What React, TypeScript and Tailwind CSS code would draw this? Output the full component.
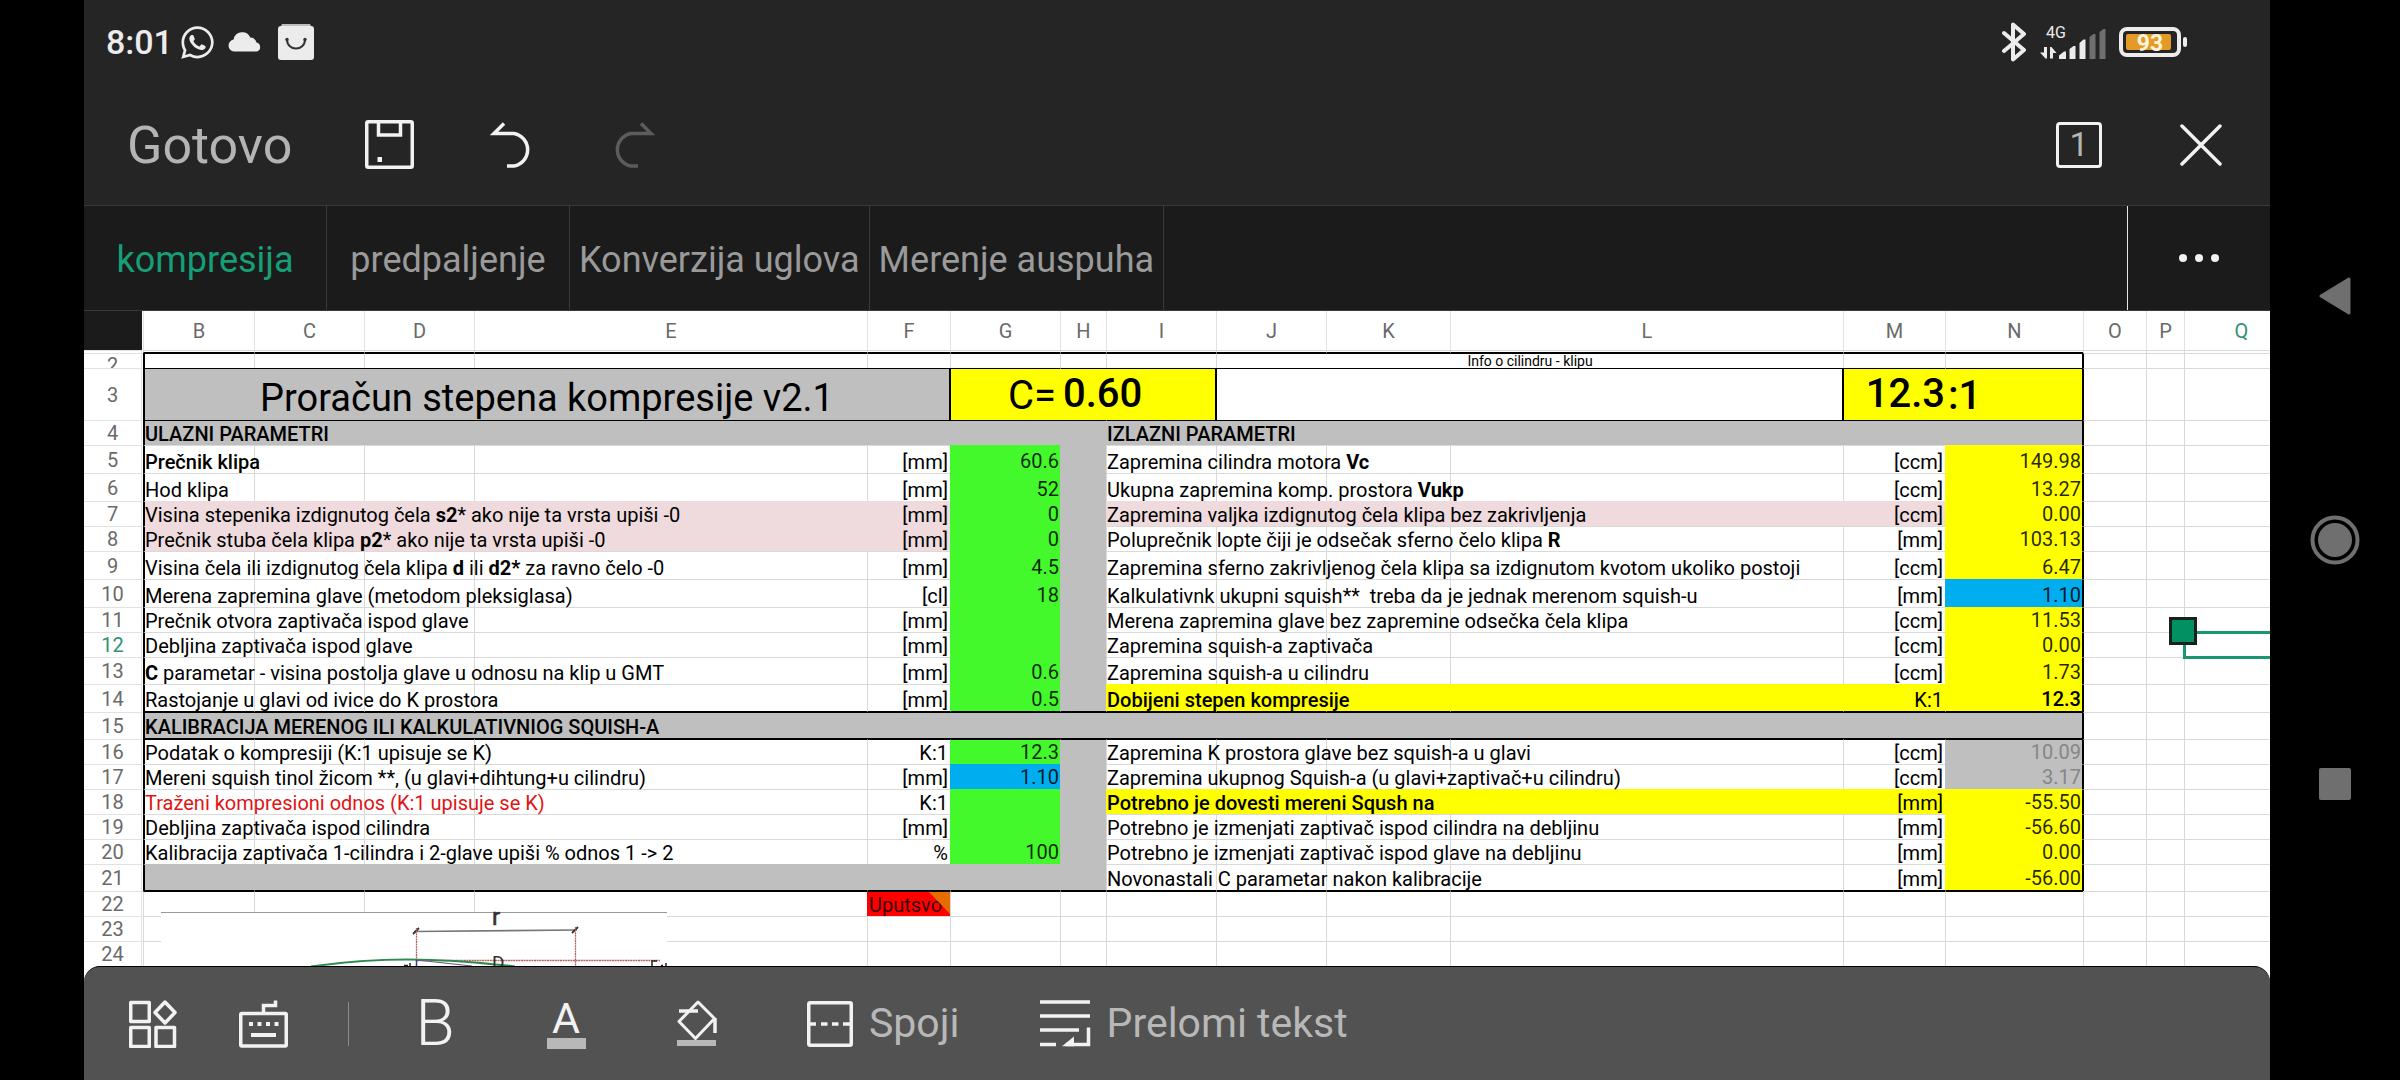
import React, { useState } from 'react';
import clsx from 'clsx';
import { FaWhatsapp } from 'react-icons/fa';

const fills = {
  none: 'bg-white border-[#d9d9d9]',
  gray: 'bg-[#bfbfbf] border-transparent',
  pink: 'bg-[#efdbdd] border-transparent',
  green: 'bg-[#43f82b] border-transparent',
  yellow: 'bg-[#ffff00] border-transparent',
  blue: 'bg-[#00adef] border-transparent',
  red: 'bg-[#ff0000] border-transparent',
};

type Fill = keyof typeof fills;

interface Side {
  label: React.ReactNode;
  unit: string;
  value: string;
  fill?: Fill;
  valueFill: Fill;
  className?: string;
  valueClass?: string;
}

interface SheetRow {
  n: number;
  height: string;
  edge?: string;
  left: Side | null;
  right: Side;
}

const faux = 'font-medium';

const rows: SheetRow[] = [
  {
    n: 5,
    height: 'h-[28px]',
    left: { label: 'Prečnik klipa', unit: '[mm]', value: '60.6', valueFill: 'green', className: faux },
    right: { label: <>Zapremina cilindra motora <b>Vc</b></>, unit: '[ccm]', value: '149.98', valueFill: 'yellow' },
  },
  {
    n: 6,
    height: 'h-[28px]',
    left: { label: 'Hod klipa', unit: '[mm]', value: '52', valueFill: 'green' },
    right: { label: <>Ukupna zapremina komp. prostora <b>Vukp</b></>, unit: '[ccm]', value: '13.27', valueFill: 'yellow' },
  },
  {
    n: 7,
    height: 'h-[25px]',
    left: {
      label: <>Visina stepenika izdignutog čela <b>s2</b>* ako nije ta vrsta upiši -0</>,
      unit: '[mm]',
      value: '0',
      fill: 'pink',
      valueFill: 'green',
    },
    right: {
      label: 'Zapremina valjka izdignutog čela klipa bez zakrivljenja',
      unit: '[ccm]',
      value: '0.00',
      fill: 'pink',
      valueFill: 'yellow',
    },
  },
  {
    n: 8,
    height: 'h-[25px]',
    left: {
      label: <>Prečnik stuba čela klipa <b>p2</b>* ako nije ta vrsta upiši -0</>,
      unit: '[mm]',
      value: '0',
      fill: 'pink',
      valueFill: 'green',
    },
    right: { label: <>Poluprečnik lopte čiji je odsečak sferno čelo klipa <b>R</b></>, unit: '[mm]', value: '103.13', valueFill: 'yellow' },
  },
  {
    n: 9,
    height: 'h-[28px]',
    left: {
      label: <>Visina čela ili izdignutog čela klipa <b>d</b> ili <b>d2*</b> za ravno čelo -0</>,
      unit: '[mm]',
      value: '4.5',
      valueFill: 'green',
    },
    right: {
      label: 'Zapremina sferno zakrivljenog čela klipa sa izdignutom kvotom ukoliko postoji',
      unit: '[ccm]',
      value: '6.47',
      valueFill: 'yellow',
    },
  },
  {
    n: 10,
    height: 'h-[28px]',
    left: { label: 'Merena zapremina glave (metodom pleksiglasa)', unit: '[cl]', value: '18', valueFill: 'green' },
    right: { label: 'Kalkulativnk ukupni squish**  treba da je jednak merenom squish-u', unit: '[mm]', value: '1.10', valueFill: 'blue' },
  },
  {
    n: 11,
    height: 'h-[25px]',
    left: { label: 'Prečnik otvora zaptivača ispod glave', unit: '[mm]', value: '', valueFill: 'green' },
    right: { label: 'Merena zapremina glave bez zapremine odsečka čela klipa', unit: '[ccm]', value: '11.53', valueFill: 'yellow' },
  },
  {
    n: 12,
    height: 'h-[25px]',
    left: { label: 'Debljina zaptivača ispod glave', unit: '[mm]', value: '', valueFill: 'green' },
    right: { label: 'Zapremina squish-a zaptivača', unit: '[ccm]', value: '0.00', valueFill: 'yellow' },
  },
  {
    n: 13,
    height: 'h-[27px]',
    left: { label: <><b>C</b> parametar - visina postolja glave u odnosu na klip u GMT</>, unit: '[mm]', value: '0.6', valueFill: 'green' },
    right: { label: 'Zapremina squish-a u cilindru', unit: '[ccm]', value: '1.73', valueFill: 'yellow' },
  },
  {
    n: 14,
    height: 'h-[28px]',
    edge: 'border-b border-b-black',
    left: { label: 'Rastojanje u glavi od ivice do K prostora', unit: '[mm]', value: '0.5', valueFill: 'green' },
    right: {
      label: 'Dobijeni stepen kompresije',
      unit: 'K:1',
      value: '12.3',
      fill: 'yellow',
      valueFill: 'yellow',
      className: faux,
      valueClass: faux,
    },
  },
  {
    n: 16,
    height: 'h-[25px]',
    edge: 'border-t-black',
    left: { label: 'Podatak o kompresiji (K:1 upisuje se K)', unit: 'K:1', value: '12.3', valueFill: 'green' },
    right: {
      label: 'Zapremina K prostora glave bez squish-a u glavi',
      unit: '[ccm]',
      value: '10.09',
      valueFill: 'gray',
      valueClass: 'text-[#868686]',
    },
  },
  {
    n: 17,
    height: 'h-[25px]',
    left: { label: 'Mereni squish tinol žicom **, (u glavi+dihtung+u cilindru)', unit: '[mm]', value: '1.10', valueFill: 'blue' },
    right: {
      label: 'Zapremina ukupnog Squish-a (u glavi+zaptivač+u cilindru)',
      unit: '[ccm]',
      value: '3.17',
      valueFill: 'gray',
      valueClass: 'text-[#868686]',
    },
  },
  {
    n: 18,
    height: 'h-[25px]',
    left: {
      label: 'Traženi kompresioni odnos (K:1 upisuje se K)',
      unit: 'K:1',
      value: '',
      valueFill: 'green',
      className: 'text-[#e01414]',
    },
    right: {
      label: 'Potrebno je dovesti mereni Sqush na',
      unit: '[mm]',
      value: '-55.50',
      fill: 'yellow',
      valueFill: 'yellow',
      className: faux,
    },
  },
  {
    n: 19,
    height: 'h-[25px]',
    left: { label: 'Debljina zaptivača ispod cilindra', unit: '[mm]', value: '', valueFill: 'green' },
    right: { label: 'Potrebno je izmenjati zaptivač ispod cilindra na debljinu', unit: '[mm]', value: '-56.60', valueFill: 'yellow' },
  },
  {
    n: 20,
    height: 'h-[25px]',
    left: { label: 'Kalibracija zaptivača 1-cilindra i 2-glave upiši % odnos 1 -> 2', unit: '%', value: '100', valueFill: 'green' },
    right: { label: 'Potrebno je izmenjati zaptivač ispod glave na debljinu', unit: '[mm]', value: '0.00', valueFill: 'yellow' },
  },
  {
    n: 21,
    height: 'h-[27px]',
    edge: 'border-b border-b-black',
    left: null,
    right: { label: 'Novonastali C parametar nakon kalibracije', unit: '[mm]', value: '-56.00', valueFill: 'yellow' },
  },
];

const columns = [
  { name: 'B', width: 'w-[111px]' },
  { name: 'C', width: 'w-[110px]' },
  { name: 'D', width: 'w-[110px]' },
  { name: 'E', width: 'w-[393px]' },
  { name: 'F', width: 'w-[83px]' },
  { name: 'G', width: 'w-[110px]' },
  { name: 'H', width: 'w-[46px]' },
  { name: 'I', width: 'w-[110px]' },
  { name: 'J', width: 'w-[110px]' },
  { name: 'K', width: 'w-[124px]' },
  { name: 'L', width: 'w-[393px]' },
  { name: 'M', width: 'w-[102px]' },
  { name: 'N', width: 'w-[138px]' },
  { name: 'O', width: 'w-[63px]' },
  { name: 'P', width: 'w-[38px]' },
  { name: 'Q', width: 'w-[114px]' },
];

const tabs = ['kompresija', 'predpaljenje', 'Konverzija uglova', 'Merenje auspuha'];

interface CellProps {
  fill?: Fill;
  className?: string;
  colSpan?: number;
  children?: React.ReactNode;
}

const Cell: React.FC<CellProps> = ({ fill = 'none', className, colSpan, children }) => (
  <td colSpan={colSpan} className={clsx('border-t border-l p-0 align-bottom whitespace-pre', fills[fill], className)}>
    {children}
  </td>
);

const RowHead: React.FC<{ n?: React.ReactNode; className?: string }> = ({ n, className }) => (
  <>
    <th
      scope="row"
      className={clsx(
        'border-t border-r border-[#e2e2e2] bg-white p-0 align-middle font-normal',
        n === 12 ? 'text-[#2f9273]' : 'text-[#6a6a6a]',
        className
      )}
    >
      {n}
    </th>
    <td className="border-t border-[#e2e2e2] bg-white p-0" />
  </>
);

// columns right of the framed area
const Tail: React.FC<{ framed?: boolean; selected?: boolean }> = ({ framed = true, selected }) => (
  <>
    <Cell className={clsx(framed && 'border-l-black')} />
    <Cell />
    <td className={clsx('border-t border-l p-0', fills.none, selected && 'relative')}>
      {selected && (
        <>
          <div className="absolute -inset-0.5 border-3 border-[#1a9672]" />
          <div className="absolute -top-4 -left-4 size-7 border-3 border-[#1a201e] bg-[#009062]" />
        </>
      )}
    </td>
  </>
);

const DataRow: React.FC<{ row: SheetRow }> = ({ row }) => {
  const { n, height, edge, left, right } = row;
  const leftFill = left ? left.fill : 'gray';
  return (
    <tr className={height}>
      <RowHead n={n} />
      <Cell fill={leftFill} className={clsx('border-l-2 border-l-black', left?.className, edge)}>
        {left?.label}
      </Cell>
      <Cell fill={leftFill} className={edge} />
      <Cell fill={leftFill} className={edge} />
      <Cell fill={leftFill} className={edge} />
      <Cell fill={leftFill} className={clsx('pr-0.5 text-right', edge)}>
        {left?.unit}
      </Cell>
      <Cell fill={left ? left.valueFill : 'gray'} className={clsx('pr-px pb-px text-right text-black/85', edge)}>
        {left?.value}
      </Cell>
      <Cell fill="gray" className={edge} />
      <Cell fill={right.fill} className={clsx(right.className, edge)}>
        {right.label}
      </Cell>
      <Cell fill={right.fill} className={edge} />
      <Cell fill={right.fill} className={edge} />
      <Cell fill={right.fill} className={edge} />
      <Cell fill={right.fill} className={clsx('pr-0.5 text-right', edge)}>
        {right.unit}
      </Cell>
      <Cell
        fill={right.valueFill}
        className={clsx('border-r border-r-black pr-px pb-px text-right', right.valueClass ?? 'text-black/85', edge)}
      >
        {right.value}
      </Cell>
      <Tail selected={n === 12} />
    </tr>
  );
};

const EmptyRow: React.FC<{ n: number }> = ({ n }) => (
  <tr className="h-[25px]">
    <RowHead n={n} />
    {columns.map((col) => (
      <Cell key={col.name} />
    ))}
  </tr>
);

// piston crown drawing placed over rows 22-24
const PistonDrawing = () => (
  <svg viewBox="0 0 506 54" className="absolute bottom-0 left-[77px] h-[54px] w-[506px] overflow-visible bg-white" fill="none">
    <path d="M0 .5H506" stroke="#9a9a9a" />
    <text x="331" y="13" fontSize="24" fill="#333" stroke="#333" strokeWidth=".6">
      r
    </text>
    <path d="M253 19.5 416 18" stroke="#777" strokeWidth="1.6" />
    <path d="m252 22 6-6M411 21l6-6" stroke="#333" strokeWidth="1.8" />
    <path d="M255.500 16V48M414.500 15V54M256 48.500H499" stroke="#b9625c" strokeWidth="1.300" strokeDasharray="2 .6" />
    <path d="M150 54.500Q200 47.500 246 47.500T354 54.500" stroke="#2e8b4f" strokeWidth="2.200" />
    <path d="M255.500 48V54" stroke="#3c3c8c" strokeWidth="1.500" />
    <path d="M256 48 311 54" stroke="#6a5a86" strokeWidth="1.200" />
    <text x="331" y="57" fontSize="19" fill="#333">
      D
    </text>
    <path d="M249 51v3M243 53.500h4M505 51v3M500 53.500h2M491 54v-5h5" stroke="#222" strokeWidth="1.500" />
  </svg>
);

const Sheet = () => (
  <div className="relative text-xl leading-[22px] text-black">
    <table className="w-[2214px] table-fixed border-separate border-spacing-0">
      <thead>
        <tr className="h-[39px] text-[#6a6a6a]">
          <th className="w-[58px] bg-[#1b1b1b] p-0" />
          <th className="w-px bg-white p-0" />
          {columns.map((col) => (
            <th
              key={col.name}
              scope="col"
              className={clsx(
                'border-l border-[#e2e2e2] bg-white p-0 align-middle font-normal',
                col.width,
                col.name === 'Q' && 'text-[#2f9273]'
              )}
            >
              {col.name}
            </th>
          ))}
        </tr>
      </thead>
      <tbody>
        <tr className="h-[3px]">
          <RowHead />
          {columns.map((col, i) => (
            <Cell key={col.name} className={clsx(i < 13 && 'border-b border-b-black')} />
          ))}
        </tr>

        <tr className="h-[15px]">
          <RowHead n={<div className="h-[14px] overflow-hidden">2</div>} />
          <Cell className="border-t-black border-l-2 border-l-black" />
          <Cell className="border-t-black" />
          <Cell className="border-t-black" />
          <Cell className="border-t-black" />
          <Cell className="border-t-black" />
          <Cell className="border-t-black" />
          <Cell className="border-t-black" />
          <Cell className="border-t-black" />
          <Cell colSpan={3} className="border-t-black text-center text-sm leading-[14px]">
            Info o cilindru - klipu
          </Cell>
          <Cell className="border-t-black" />
          <Cell className="border-t-black border-r border-r-black" />
          <Tail />
        </tr>

        <tr className="h-[52px] text-[40px] leading-[44px]">
          <RowHead n={3} className="text-xl leading-[22px]" />
          <Cell
            colSpan={5}
            fill="gray"
            className="border-t-black border-r border-r-black border-l-2 border-l-black text-center text-[38px]"
          >
            Proračun stepena kompresije v2.1
          </Cell>
          <Cell fill="yellow" className="border-t-black border-l-black pr-1 pb-0.5 text-right">
            C=
          </Cell>
          <Cell colSpan={2} fill="yellow" className="border-t-black border-r border-r-black pb-1 pl-0.5 font-medium">
            0.60
          </Cell>
          <Cell colSpan={3} className="border-t-black border-r border-l-black border-r-black" />
          <Cell fill="yellow" className="border-t-black border-l-black pb-1 text-right font-medium">
            12.3
          </Cell>
          <Cell fill="yellow" className="border-t-black border-r border-r-black pb-0.5 pl-0.5 font-medium">
            :1
          </Cell>
          <Tail />
        </tr>

        <tr className="h-[25px]">
          <RowHead n={4} />
          <Cell colSpan={7} fill="gray" className="border-t-black border-l-2 border-l-black font-medium">
            ULAZNI PARAMETRI
          </Cell>
          <Cell colSpan={6} fill="gray" className="border-t-black border-r border-r-black font-medium">
            IZLAZNI PARAMETRI
          </Cell>
          <Tail />
        </tr>

        {rows.slice(0, 10).map((row) => (
          <DataRow key={row.n} row={row} />
        ))}

        <tr className="h-[27px]">
          <RowHead n={15} />
          <Cell
            colSpan={13}
            fill="gray"
            className="border-t-black border-r border-b border-l-2 border-r-black border-b-black border-l-black font-medium"
          >
            KALIBRACIJA MERENOG ILI KALKULATIVNIOG SQUISH-A
          </Cell>
          <Tail />
        </tr>

        {rows.slice(10).map((row) => (
          <DataRow key={row.n} row={row} />
        ))}

        <tr className="h-[25px]">
          <RowHead n={22} />
          {columns.map((col, i) =>
            col.name === 'F' ? (
              <Cell key={col.name} fill="red" className="relative border-t-black pl-px text-black/80">
                Uputsvo
                <svg viewBox="0 0 21 22" className="absolute top-0 right-0 h-[22px] w-[21px]">
                  <path d="M0 0H21V22Z" fill="#e66c00" />
                </svg>
              </Cell>
            ) : (
              <Cell key={col.name} className={clsx(i < 13 && 'border-t-black')} />
            )
          )}
        </tr>
        <EmptyRow n={23} />
        <EmptyRow n={24} />
      </tbody>
    </table>
    <PistonDrawing />
  </div>
);

const StatusBar = () => (
  <div className="flex h-[84px] items-center justify-between pr-[82px] pl-[22px] text-[#ececec]">
    <div className="flex items-center">
      <span className="text-[34px] font-medium">8:01</span>
      <FaWhatsapp className="ml-1.5 size-[37px]" />
      <svg viewBox="0 0 34 20" className="ml-3 h-[20px] w-[34px]" fill="currentColor">
        <path d="M6 19.500a6 6 0 0 1-.4-11.900A8.800 8.800 0 0 1 22.300 5.500a7 7 0 0 1 6.200 5A4.700 4.700 0 0 1 29 19.500Z" />
      </svg>
      <svg viewBox="0 0 36 36" className="ml-4 size-9">
        <path d="M4 0H32L34 4H2Z" fill="#bdbdbd" />
        <rect y="2" width="36" height="34" rx="3" fill="#ececec" />
        <path d="M9 15.500c0 12 18 12 18 0" fill="none" stroke="#333" strokeWidth="2" />
        <circle cx="9" cy="15.500" r="1.700" fill="#333" />
        <circle cx="27" cy="15.500" r="1.700" fill="#333" />
      </svg>
    </div>
    <div className="flex items-center">
      <svg
        viewBox="0 0 26 40"
        className="h-[40px] w-[26px]"
        fill="none"
        stroke="currentColor"
        strokeWidth="4"
        strokeLinecap="round"
        strokeLinejoin="round"
      >
        <path d="m3 11 20 17-11 9.500V2.500L23 12 3 29" />
      </svg>
      <svg viewBox="0 0 68 36" className="ml-3 h-[36px] w-[68px]" fill="currentColor">
        <text x="7" y="14" fontSize="16">
          4G
        </text>
        <path d="M5 23h3v11.500H6.500L1 28.500h4ZM11 34.500V23h1.500l5 6H14v5.500Z" />
        <path d="M20 35v-3.500l5-4h2V35ZM30.500 35V25l4-3h2v13ZM40.500 35V19l4-3.500h2V35Z" />
        <path d="M50.500 35V13l4-3h2v25ZM60.500 35V8l4-3h2v30Z" fill="#6f6f6f" />
      </svg>
      <svg viewBox="0 0 69 30" className="ml-3 h-[30px] w-[69px]">
        <rect x="2" y="2" width="58" height="26" rx="6" fill="none" stroke="#ececec" strokeWidth="4" />
        <rect x="7" y="7" width="45" height="16" rx="2" fill="#e39a26" />
        <rect x="64" y="10" width="4" height="10" rx="2" fill="#ececec" />
        <text x="31" y="24" fontSize="23" fontWeight="700" textAnchor="middle" fill="#fff3dc">
          93
        </text>
      </svg>
    </div>
  </div>
);

const iconButton = 'flex w-[122px] items-center justify-center';

const TitleBar = () => (
  <header className="flex h-[122px] items-stretch border-b border-[#3a3a3a] pr-2 pl-[43px]">
    <button type="button" className="pt-0.5 pr-9 text-[52px] text-[#b4b4b4]">
      Gotovo
    </button>
    <button type="button" aria-label="Sačuvaj" className={iconButton}>
      <svg viewBox="0 0 49 49" className="size-[49px]" fill="none" stroke="#f2f2f2" strokeWidth="3.500">
        <rect x="1.750" y="1.750" width="45.500" height="45.500" rx="1.500" />
        <path d="M13.500 2v13h22V2" />
        <path d="M12.500 39.500h4.500" strokeWidth="5" />
      </svg>
    </button>
    <button type="button" aria-label="Opozovi" className={iconButton}>
      <svg viewBox="0 0 43 46" className="h-[46px] w-[43px]" fill="none" stroke="#f2f2f2" strokeWidth="3.500">
        <path d="M14 1.500 4 11.500H24a16.500 16.500 0 0 1 0 32.500H17" />
      </svg>
    </button>
    <button type="button" aria-label="Ponovi" className={iconButton} disabled>
      <svg viewBox="0 0 43 46" className="h-[46px] w-[43px]" fill="none" stroke="#5c5c5c" strokeWidth="3.500">
        <path d="M29 1.500 39 11.500H19a16.500 16.500 0 0 0 0 32.500H26" />
      </svg>
    </button>
    <button type="button" className="ml-auto flex w-[122px] items-center justify-center">
      <span className="flex size-[46px] items-center justify-center rounded-sm border-3 border-[#f2f2f2] text-[34px] text-[#b4b4b4]">
        1
      </span>
    </button>
    <button type="button" aria-label="Zatvori" className={iconButton}>
      <svg viewBox="0 0 42 42" className="size-[42px]" stroke="#f2f2f2" strokeWidth="3.500" strokeLinecap="round">
        <path d="m2 2 38 38M40 2 2 40" />
      </svg>
    </button>
  </header>
);

const BottomBar = () => (
  <footer className="bg-white">
    <div className="flex h-[114px] items-stretch rounded-t-2xl border-t border-black bg-[#525252] pl-[14px] text-[41px] text-[#b8b8b8]">
      <button type="button" aria-label="Alati" className="flex w-[110px] items-center justify-center">
        <svg viewBox="0 0 48 48" className="size-12" fill="none" stroke="#f2f2f2" strokeWidth="3.500" strokeLinejoin="round">
          <rect x="1.750" y="2.500" width="18.500" height="19" />
          <rect x="1.750" y="27.500" width="18.500" height="19" />
          <rect x="27" y="27.500" width="18.500" height="19" />
          <path d="m36 2 10 10.500L36 23 26 12.500Z" />
        </svg>
      </button>
      <button type="button" aria-label="Tastatura" className="flex w-[110px] items-center justify-center">
        <svg viewBox="0 0 49 48" className="h-[48px] w-[49px]" fill="none" stroke="#f2f2f2" strokeWidth="3.500">
          <rect x="1.750" y="13.500" width="45.500" height="32.500" rx="1" />
          <path d="M24.500 13V5.500H36.500V.500" />
          <path d="M10 24h30" strokeDasharray="4 4.500" strokeWidth="4" />
          <path d="M12 35h25" strokeWidth="4" />
        </svg>
      </button>
      <div className="mr-5 ml-[30px] h-11 w-px self-center bg-[#8a8a8a]" />
      <button type="button" aria-label="Podebljano" className="w-[132px] text-[64px] font-light text-[#f2f2f2]">
        B
      </button>
      <button type="button" aria-label="Boja teksta" className="flex w-[130px] flex-col items-center justify-center text-[#f2f2f2]">
        <span className="text-[43px] leading-[40px]">A</span>
        <span className="h-[11px] w-[39px] bg-[#b8b8b8]" />
      </button>
      <button type="button" aria-label="Boja ispune" className="flex w-[132px] items-center justify-center">
        <svg viewBox="0 0 40 47" className="h-[47px] w-[40px]" fill="none" stroke="#f2f2f2" strokeWidth="3">
          <path d="M21 2 2 21.500 18.500 38.500 37.500 18.500Z" strokeLinejoin="round" />
          <path d="M2 11H21M38 18V33" strokeWidth="3.500" />
          <path d="M0 43H39" stroke="#b8b8b8" strokeWidth="6" />
        </svg>
      </button>
      <button type="button" className="ml-11 flex items-center gap-4">
        <svg viewBox="0 0 46 46" className="size-[46px]" fill="none" stroke="#f2f2f2" strokeWidth="3.500">
          <rect x="1.750" y="1.750" width="42.500" height="42.500" rx="1.500" />
          <path d="M3 23h6M14 23h6.500M25 23h6.500M36 23h7" />
        </svg>
        Spoji
      </button>
      <button type="button" className="ml-20 flex items-center gap-4">
        <svg viewBox="0 0 51 47" className="h-[47px] w-[51px]" fill="none" stroke="#f2f2f2" strokeWidth="3.500">
          <path d="M0 2H50M0 16H50M0 30H39M0 44.500H16M26 44.500H48.500V27.500" />
          <path d="M22 46.200 34 36.500V46.200Z" fill="#f2f2f2" stroke="none" />
        </svg>
        Prelomi tekst
      </button>
    </div>
  </footer>
);

const navButton = 'flex h-[244px] items-center justify-center';

export default function App() {
  const [active, setActive] = useState(tabs[0]);

  return (
    <div className="flex h-screen bg-black pl-[84px] font-[Roboto,sans-serif]">
      <main className="flex min-w-0 flex-1 flex-col overflow-hidden bg-[#252525]">
        <StatusBar />
        <TitleBar />
        <nav className="flex h-[105px] items-stretch border-b border-[#3a3a3a] bg-[#1b1b1b] text-4xl">
          {tabs.map((tab) => (
            <button
              key={tab}
              type="button"
              onClick={() => setActive(tab)}
              className={clsx(
                'min-w-[243px] border-r border-[#3a3a3a] px-[9px] pt-1',
                tab === active ? 'text-[#169f77]' : 'text-[#9a9a9a]'
              )}
            >
              {tab}
            </button>
          ))}
          <button
            type="button"
            aria-label="Više"
            className="ml-auto flex w-[143px] items-center justify-center gap-2 border-l border-[#e8e8e8]"
          >
            <span className="size-2 rounded-full bg-[#f2f2f2]" />
            <span className="size-2 rounded-full bg-[#f2f2f2]" />
            <span className="size-2 rounded-full bg-[#f2f2f2]" />
          </button>
        </nav>
        <div className="min-h-0 flex-1 overflow-hidden bg-white">
          <Sheet />
        </div>
        <BottomBar />
      </main>
      <aside className="flex w-[130px] flex-col justify-center">
        <button type="button" aria-label="Nazad" className={navButton}>
          <svg viewBox="0 0 32 38" className="h-[38px] w-[32px]">
            <path d="M2 19 30 2V36Z" fill="#6f6f6f" stroke="#6f6f6f" strokeWidth="3" strokeLinejoin="round" />
          </svg>
        </button>
        <button type="button" aria-label="Početna" className={navButton}>
          <svg viewBox="0 0 50 50" className="size-[50px]">
            <circle cx="25" cy="25" r="22.500" fill="none" stroke="#6f6f6f" strokeWidth="4" />
            <circle cx="25" cy="25" r="17" fill="#6f6f6f" />
          </svg>
        </button>
        <button type="button" aria-label="Nedavne aplikacije" className={navButton}>
          <span className="size-8 rounded-xs bg-[#6f6f6f]" />
        </button>
      </aside>
    </div>
  );
}
